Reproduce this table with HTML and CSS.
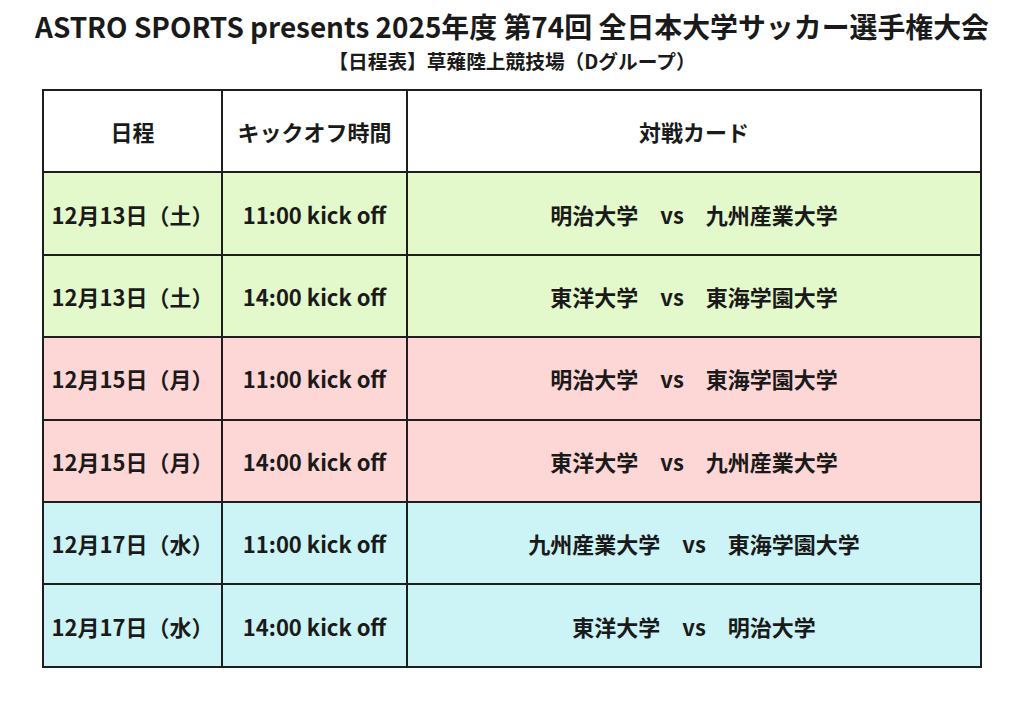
FILE: index.html
```html
<!DOCTYPE html>
<html lang="ja">
<head>
<meta charset="utf-8">
<link rel="stylesheet" href="styles.css">
</head>
<body>
<div class="page">
  <h1 class="title">ASTRO SPORTS presents 2025年度 第74回 全日本大学サッカー選手権大会</h1>
  <p class="subtitle">【日程表】草薙陸上競技場（Dグループ）</p>
  <table class="schedule">
    <colgroup>
      <col class="c-date">
      <col class="c-time">
      <col class="c-match">
    </colgroup>
    <thead>
      <tr><th>日程</th><th>キックオフ時間</th><th>対戦カード</th></tr>
    </thead>
    <tbody>
      <tr class="green"><td>12月13日（土）</td><td>11:00 kick off</td><td>明治大学　vs　九州産業大学</td></tr>
      <tr class="green"><td>12月13日（土）</td><td>14:00 kick off</td><td>東洋大学　vs　東海学園大学</td></tr>
      <tr class="pink"><td>12月15日（月）</td><td>11:00 kick off</td><td>明治大学　vs　東海学園大学</td></tr>
      <tr class="pink"><td>12月15日（月）</td><td>14:00 kick off</td><td>東洋大学　vs　九州産業大学</td></tr>
      <tr class="cyan"><td>12月17日（水）</td><td>11:00 kick off</td><td>九州産業大学　vs　東海学園大学</td></tr>
      <tr class="cyan"><td>12月17日（水）</td><td>14:00 kick off</td><td>東洋大学　vs　明治大学</td></tr>
    </tbody>
  </table>
</div>
</body>
</html>
```

FILE: styles.css
```css
html, body {
  margin: 0;
  padding: 0;
  background: #ffffff;
}
body {
  font-family: "Noto Sans CJK JP", "Noto Sans", sans-serif;
  color: #1a1a1a;
}
.page {
  display: flex;
  flex-direction: column;
  align-items: center;
  padding-top: 5.5px;
}
.title {
  margin: 0;
  font-size: 27.9px;
  font-weight: 700;
  line-height: 40px;
  white-space: nowrap;
}
.subtitle {
  margin: 0;
  font-size: 19.7px;
  font-weight: 700;
  line-height: 29px;
}
.schedule {
  margin-top: 14.5px;
  border-collapse: collapse;
  width: 938px;
  table-layout: fixed;
}
.c-date { width: 179px; }
.c-time { width: 185px; }
.c-match { width: 574px; }
.schedule th,
.schedule td {
  border: 2px solid #1e1e1e;
  height: 80.4px;
  padding: 0;
  text-align: center;
  vertical-align: middle;
  font-weight: 700;
  font-size: 22px;
  white-space: nowrap;
}
.schedule th {
  background: #ffffff;
}
.green td { background: #e3f8cb; }
.pink td { background: #fdd6d6; }
.cyan td { background: #ccf3f5; }
```
